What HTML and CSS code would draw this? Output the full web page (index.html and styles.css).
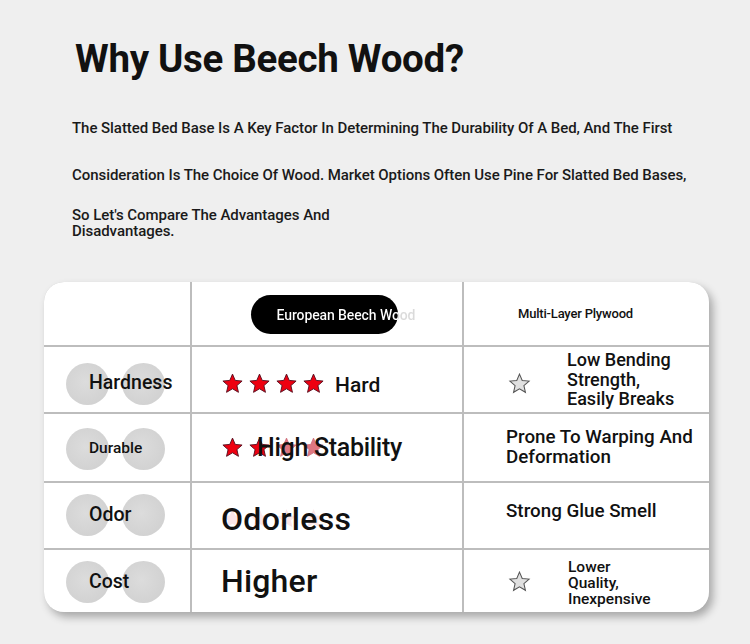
FILE: index.html
```html
<!DOCTYPE html>
<html lang="en">
<head>
<meta charset="utf-8">
<title>Why Use Beech Wood?</title>
<link rel="stylesheet" href="styles.css">
</head>
<body>
<svg width="0" height="0" class="defs">
  <defs>
    <path id="star" d="M12 2.2l2.85 6.6 7.15.65-5.4 4.75 1.6 7L12 17.5l-6.2 3.7 1.6-7L2 9.45l7.15-.65z"/>
  </defs>
</svg>
<div class="page">
  <h1 class="title">Why Use Beech Wood?</h1>
  <p class="intro l1">The Slatted Bed Base Is A Key Factor In Determining The Durability Of A Bed, And The First</p>
  <p class="intro l2">Consideration Is The Choice Of Wood. Market Options Often Use Pine For Slatted Bed Bases,</p>
  <p class="intro l3">So Let's Compare The Advantages And<br>Disadvantages.</p>

  <div class="table">
    <div class="cell head"></div>
    <div class="cell head center">
      <span class="pill"><span class="pill-text">European Beech Wood</span></span>
    </div>
    <div class="cell head center"><span class="head-text">Multi-Layer Plywood</span></div>

    <div class="cell label r1"><span class="label-text">Hardness</span></div>
    <div class="cell beech r1">
      <span class="stars">
        <svg class="star red" viewBox="0 0 24 24"><use href="#star"/></svg>
        <svg class="star red" viewBox="0 0 24 24"><use href="#star"/></svg>
        <svg class="star red" viewBox="0 0 24 24"><use href="#star"/></svg>
        <svg class="star red" viewBox="0 0 24 24"><use href="#star"/></svg>
      </span>
      <span class="hard">Hard</span>
    </div>
    <div class="cell ply with-star">
      <svg class="star gray low" viewBox="0 0 24 24"><use href="#star"/></svg>
      <span class="ply-text">Low Bending<br>Strength,<br>Easily Breaks</span>
    </div>

    <div class="cell label"><span class="label-text small">Durable</span></div>
    <div class="cell beech">
      <div class="stack">
        <span class="stars">
          <svg class="star red" viewBox="0 0 24 24"><use href="#star"/></svg>
          <svg class="star red" viewBox="0 0 24 24"><use href="#star"/></svg>
          <svg class="star faded" viewBox="0 0 24 24"><use href="#star"/></svg>
          <svg class="star faded" viewBox="0 0 24 24"><use href="#star"/></svg>
        </span>
        <span class="stability">High Stability</span>
      </div>
    </div>
    <div class="cell ply">
      <span class="ply-text wide">Prone To Warping And<br>Deformation</span>
    </div>

    <div class="cell label r3"><span class="label-text">Odor</span></div>
    <div class="cell beech">
      <div class="stack">
        <span class="stars ghost">
          <svg class="star faint" viewBox="0 0 24 24"><use href="#star"/></svg>
          <svg class="star faint" viewBox="0 0 24 24"><use href="#star"/></svg>
          <svg class="star faint" viewBox="0 0 24 24"><use href="#star"/></svg>
          <svg class="star faint" viewBox="0 0 24 24"><use href="#star"/></svg>
        </span>
        <span class="big">Odorless</span>
      </div>
    </div>
    <div class="cell ply">
      <span class="ply-text wide glue">Strong Glue Smell</span>
    </div>

    <div class="cell label"><span class="label-text">Cost</span></div>
    <div class="cell beech">
      <span class="big higher">Higher</span>
    </div>
    <div class="cell ply with-star">
      <svg class="star gray" viewBox="0 0 24 24"><use href="#star"/></svg>
      <span class="ply-text tight">Lower<br>Quality,<br>Inexpensive</span>
    </div>
  </div>
</div>
</body>
</html>
```

FILE: styles.css
```css
* { box-sizing: border-box; }

html, body {
  margin: 0;
  padding: 0;
  background: #efefef;
  font-family: Roboto, "Liberation Sans", sans-serif;
  color: #111;
}

.defs { position: absolute; }

.page {
  width: 750px;
  height: 644px;
  padding: 37px 0 0 44px;
}

.title {
  margin: 0 0 0 31px;
  font-size: 38.5px;
  line-height: 44px;
  font-weight: 700;
  letter-spacing: -0.3px;
  color: #111;
}

.intro {
  margin: 0;
  padding-left: 28px;
  font-size: 15px;
  font-weight: 500;
  letter-spacing: -0.05px;
  line-height: 16px;
  color: #1a1a1a;
}

.l1 { margin-top: 39px; }
.l2 { margin-top: 31px; }
.l3 { margin-top: 24px; }

.table {
  margin-top: 43px;
  width: 665px;
  display: grid;
  grid-template-columns: 146px 270px 245px;
  grid-template-rows: 63px 65px 67px 65px 62px;
  gap: 2px;
  background: #bdbdbd;
  border-radius: 20px;
  overflow: hidden;
  box-shadow: 4px 5px 8px rgba(0, 0, 0, 0.3);
}

.cell {
  background: #fff;
  display: flex;
  align-items: center;
}

.center { justify-content: center; }

.head.center:nth-child(2) { padding-right: 6px; }
.head.center:nth-child(3) { padding-right: 22px; }

.pill {
  width: 147px;
  height: 39px;
  border-radius: 20px;
  background: #000;
  display: flex;
  align-items: center;
  padding-left: 26px;
  margin-top: 2px;
}

.pill-text {
  white-space: nowrap;
  font-size: 14px;
  font-weight: 500;
  letter-spacing: -0.1px;
  background: linear-gradient(to right, #fff 0, #fff 121px, #dadada 121px, #dadada 100%);
  -webkit-background-clip: text;
  background-clip: text;
  color: transparent;
}

.head-text {
  font-size: 13px;
  font-weight: 500;
  letter-spacing: -0.2px;
  color: #111;
}

/* row labels with two soft circles behind */
.label {
  position: relative;
  padding-left: 45px;
}

.label::before,
.label::after {
  content: "";
  position: absolute;
  top: calc(50% - 20px);
  width: 43px;
  height: 42px;
  border-radius: 50%;
  background: radial-gradient(circle at 45% 45%, #dcdcdc, #d2d2d2 70%, #cfcfcf);
}

.label::before { left: 22px; }
.label::after { left: 78px; }

.label.r1 { padding-top: 6px; }
.label.r1::before, .label.r1::after { top: calc(50% - 17px); }
.label.r3 { padding-bottom: 2px; }
.label.r3::before, .label.r3::after { top: calc(50% - 22px); }

.label-text {
  position: relative;
  z-index: 1;
  font-size: 19.5px;
  font-weight: 500;
  color: #111;
}

.label-text.small { font-size: 15.5px; }

/* beech column */
.beech { padding-left: 29px; }
.beech.r1 { padding-top: 8px; }

.stars {
  display: flex;
  gap: 4px;
}

.star {
  width: 23px;
  height: 23px;
  display: block;
}

.star.red { fill: #ee0010; stroke: #5a1020; stroke-width: 1; }
.star.faded { fill: #d9606c; stroke: #c05060; stroke-width: 0.8; opacity: 0.85; }
.star.faint { fill: #f3b8be; stroke: none; opacity: 0.35; }
.star.gray { fill: #e0e0e0; stroke: #555; stroke-width: 1.1; }
.star.low { margin-top: 8px; }

.hard {
  margin-left: 10px;
  font-size: 21px;
  font-weight: 500;
  margin-top: 2px;
}

.stack {
  display: grid;
  align-items: center;
}

.stack > * { grid-area: 1 / 1; }

.stability {
  padding-left: 36px;
  font-size: 25px;
  font-weight: 500;
  letter-spacing: -0.3px;
  position: relative;
}

.ghost { margin-top: 6px; }

.big {
  font-size: 32px;
  font-weight: 500;
  letter-spacing: 0.3px;
  position: relative;
  margin-top: 6px;
}

.higher { margin-top: 0; letter-spacing: 0.2px; }

/* plywood column */
.ply {
  padding-left: 42px;
}

.with-star { padding-left: 44px; }

.with-star .star { margin-right: 36px; flex: none; }

.ply-text {
  font-size: 18px;
  font-weight: 500;
  line-height: 19.5px;
  color: #111;
}

.ply-text.wide { font-size: 18.8px; }

.glue { margin-top: -8px; }

.tight {
  font-size: 15.5px;
  line-height: 16px;
  margin-left: 1px;
  margin-top: 4px;
}
```
